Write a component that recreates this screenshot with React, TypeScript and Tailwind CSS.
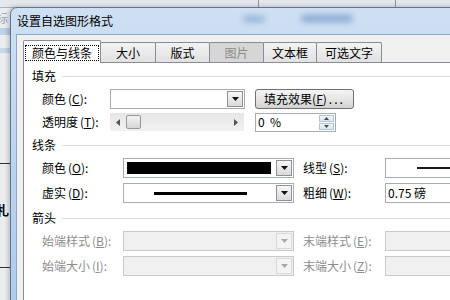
import type { ReactNode } from 'react'

function Key({ k }: { k: string }) {
  return (
    <span className="ml-[2px]">
      (<span className="underline underline-offset-[1px]">{k}</span>):
    </span>
  )
}

function Label({ text, k, w, off }: { text: string; k: string; w: string; off?: boolean }) {
  return (
    <div className={`${w} shrink-0 whitespace-nowrap ${off ? 'text-[#8d8d8d]' : 'text-black'}`}>
      {text}
      <Key k={k} />
    </div>
  )
}

function Section({ title, className }: { title: string; className: string }) {
  return (
    <div className={`flex h-[14px] items-center gap-[6px] ${className}`}>
      <span>{title}</span>
      <div className="h-px flex-1 bg-[#d9dde2]" />
    </div>
  )
}

function DropBtn({ off }: { off?: boolean }) {
  return (
    <div
      className={`flex w-[16px] shrink-0 items-center justify-center border ${
        off ? 'border-[#dadada] bg-[#f4f4f4]' : 'border-[#8f9195] bg-gradient-to-b from-[#f7f7f7] to-[#d9dadc]'
      }`}
    >
      <svg width="7" height="4" viewBox="0 0 7 4">
        <path d="M0 0h7L3.5 4z" fill={off ? '#a8a8a8' : '#111'} />
      </svg>
    </div>
  )
}

function Combo({ w, off, children }: { w: string; off?: boolean; children?: ReactNode }) {
  return (
    <div
      className={`flex h-[20px] ${w} shrink-0 border p-[1px] ${
        off ? 'border-[#c9c9c9] bg-[#f0f0f0]' : 'border-[#a5acb5] bg-white'
      }`}
    >
      <div className="flex flex-1 items-center">{children}</div>
      <DropBtn off={off} />
    </div>
  )
}

function Box({ off, children }: { off?: boolean; children?: ReactNode }) {
  return (
    <div
      className={`flex h-[20px] w-[110px] shrink-0 items-center border ${
        off ? 'border-[#c9c9c9] bg-[#f0f0f0]' : 'border-[#a5acb5] bg-white'
      }`}
    >
      {children}
    </div>
  )
}

const tabs = [
  { name: '大小', w: 'w-[56px]' },
  { name: '版式', w: 'w-[55px]' },
  { name: '图片', w: 'w-[55px]', off: true },
  { name: '文本框', w: 'w-[54px]' },
  { name: '可选文字', w: 'w-[66px]' },
]

export default function App() {
  return (
    <div className="relative h-[300px] w-[450px] overflow-hidden bg-[#eceef1] font-['Noto_Sans_CJK_SC','Microsoft_YaHei',sans-serif] text-[12px] leading-[14px] text-black">
      {/* window behind the dialog */}
      <div className="absolute inset-x-0 top-0 h-[8px] border-b border-[#aeb5be] bg-[#e4e7eb]">
        <div className="absolute left-[258px] top-0 h-full w-px bg-[#8f959d]" />
        <div className="absolute left-[395px] top-0 h-full w-px bg-[#8f959d]" />
      </div>
      <div className="absolute left-0 top-[8px] h-[292px] w-[10px] bg-gradient-to-r from-[#e9eaec] to-[#f7f7f8]">
        <span className="absolute -left-[4px] top-[3px] text-[#8ea3bd]">标</span>
        <div className="absolute left-0 top-[20px] h-[7px] w-full bg-[#bfd2e9]" />
        <div className="absolute left-0 top-[40px] h-[5px] w-full bg-[#c9d9ec]" />
        <div className="absolute left-0 top-[155px] h-px w-full bg-[#333]" />
        <span className="absolute -left-[4px] top-[195px] text-[13px] font-bold">札</span>
        <div className="absolute left-0 top-[259px] h-px w-full bg-[#333]" />
      </div>

      {/* dialog */}
      <div className="absolute left-[10px] top-[7px] h-[320px] w-[470px] rounded-tl-[7px] border border-[#58799f] bg-gradient-to-b from-[#cfe0f3] via-[#bcd3ec] to-[#aecae9] shadow-[-2px_0_5px_rgba(0,0,0,0.25)]">
        <div className="relative flex h-[26px] items-center pl-[6px]">
          <span>设置自选图形格式</span>
          <div className="absolute left-[232px] top-[8px] h-[6px] w-[22px] rounded-full bg-[#8eafd6] blur-[3px]" />
          <div className="absolute left-[290px] top-[7px] h-[7px] w-[52px] rounded-full bg-[#86a8d2] blur-[3px]" />
        </div>

        <div className="ml-[5px] h-full border-l border-t border-[#8ea8c8] bg-[#f0f0f0] pl-[6px] pt-[5px]">
          {/* tabs */}
          <div className="relative z-10 -mb-px flex h-[23px] items-start">
            <div className="relative z-10 h-[23px] w-[78px] shrink-0 rounded-t-[2px] border-x border-t border-[#898c95] bg-white px-px pt-[4px]">
              <div className="flex h-[16px] items-center justify-center border border-dotted border-black">颜色与线条</div>
            </div>
            {tabs.map(t => (
              <div
                key={t.name}
                className={`-ml-px mt-[2px] flex h-[20px] ${t.w} shrink-0 items-center justify-center rounded-t-[2px] border-x border-t border-[#898c95] ${
                  t.off ? 'bg-[#d6d6d6] text-[#8a8a8a]' : 'bg-gradient-to-b from-[#f3f3f3] to-[#e1e1e1]'
                }`}
              >
                {t.name}
              </div>
            ))}
          </div>

          {/* tab page */}
          <div className="h-full border-l border-t border-[#898c95] bg-white pl-[8px] pt-[6px]">
            <Section title="填充" className="" />

            <div className="mt-[6px] flex h-[20px] items-center pl-[10px]">
              <Label text="颜色" k="C" w="w-[68px]" />
              <Combo w="w-[135px]" />
              <button className="ml-[10px] flex h-[20px] w-[99px] shrink-0 items-center justify-center rounded-[3px] border border-[#707070] bg-gradient-to-b from-[#f4f4f4] via-[#e6e6e6] to-[#d2d2d2] whitespace-nowrap">
                填充效果(<span className="underline underline-offset-[1px]">F</span>)<span className="ml-[2px] tracking-[2px]">...</span>
              </button>
            </div>

            <div className="mt-[3px] flex h-[20px] items-center pl-[10px]">
              <Label text="透明度" k="T" w="w-[68px]" />
              <div className="flex h-[18px] w-[134px] shrink-0 items-center bg-gradient-to-b from-[#e6e6e6] to-[#f1f1f1] px-[6px]">
                <svg width="4" height="7" viewBox="0 0 4 7">
                  <path d="M4 0v7L0 3.5z" fill="#555" />
                </svg>
                <div className="ml-[6px] h-[14px] w-[15px] rounded-[2px] border border-[#979797] bg-gradient-to-b from-[#f3f3f3] to-[#d6d6d6]" />
                <div className="flex-1" />
                <svg width="4" height="7" viewBox="0 0 4 7">
                  <path d="M0 0v7L4 3.5z" fill="#555" />
                </svg>
              </div>
              <div className="ml-[11px] flex h-[19px] w-[81px] shrink-0 items-stretch border border-[#a5acb5] bg-white">
                <span className="flex flex-1 items-center pl-[2px] whitespace-pre">0  %</span>
                <div className="my-px mr-px flex w-[15px] flex-col gap-px">
                  <div className="flex flex-1 items-center justify-center border border-[#b7c4d6] bg-gradient-to-b from-[#f3f7fc] to-[#d9e4f1]">
                    <svg width="5" height="3" viewBox="0 0 5 3">
                      <path d="M0 3h5L2.5 0z" fill="#3d4a5c" />
                    </svg>
                  </div>
                  <div className="flex flex-1 items-center justify-center border border-[#b7c4d6] bg-gradient-to-b from-[#f3f7fc] to-[#d9e4f1]">
                    <svg width="5" height="3" viewBox="0 0 5 3">
                      <path d="M0 0h5L2.5 3z" fill="#3d4a5c" />
                    </svg>
                  </div>
                </div>
              </div>
            </div>

            <Section title="线条" className="mt-[6px]" />

            <div className="mt-[6px] flex h-[20px] items-center pl-[10px]">
              <Label text="颜色" k="O" w="w-[81px]" />
              <Combo w="w-[171px]">
                <div className="ml-[2px] mr-[5px] h-[12px] flex-1 bg-black" />
              </Combo>
              <div className="w-[9px] shrink-0" />
              <Label text="线型" k="S" w="w-[82px]" />
              <Box>
                <div className="ml-[31px] h-[2px] flex-1 bg-[#1a1a1a]" />
              </Box>
            </div>

            <div className="mt-[5px] flex h-[20px] items-center pl-[10px]">
              <Label text="虚实" k="D" w="w-[81px]" />
              <Combo w="w-[171px]">
                <div className="ml-[29px] mr-[29px] h-[3px] flex-1 bg-black" />
              </Combo>
              <div className="w-[9px] shrink-0" />
              <Label text="粗细" k="W" w="w-[82px]" />
              <Box>
                <span className="pl-[2px]">0.75 磅</span>
              </Box>
            </div>

            <Section title="箭头" className="mt-[8px]" />

            <div className="mt-[6px] flex h-[20px] items-center pl-[10px]">
              <Label text="始端样式" k="B" w="w-[81px]" off />
              <Combo w="w-[171px]" off />
              <div className="w-[9px] shrink-0" />
              <Label text="末端样式" k="E" w="w-[82px]" off />
              <Box off />
            </div>

            <div className="mt-[5px] flex h-[20px] items-center pl-[10px]">
              <Label text="始端大小" k="I" w="w-[81px]" off />
              <Combo w="w-[171px]" off />
              <div className="w-[9px] shrink-0" />
              <Label text="末端大小" k="Z" w="w-[82px]" off />
              <Box off />
            </div>
          </div>
        </div>
      </div>
    </div>
  )
}
